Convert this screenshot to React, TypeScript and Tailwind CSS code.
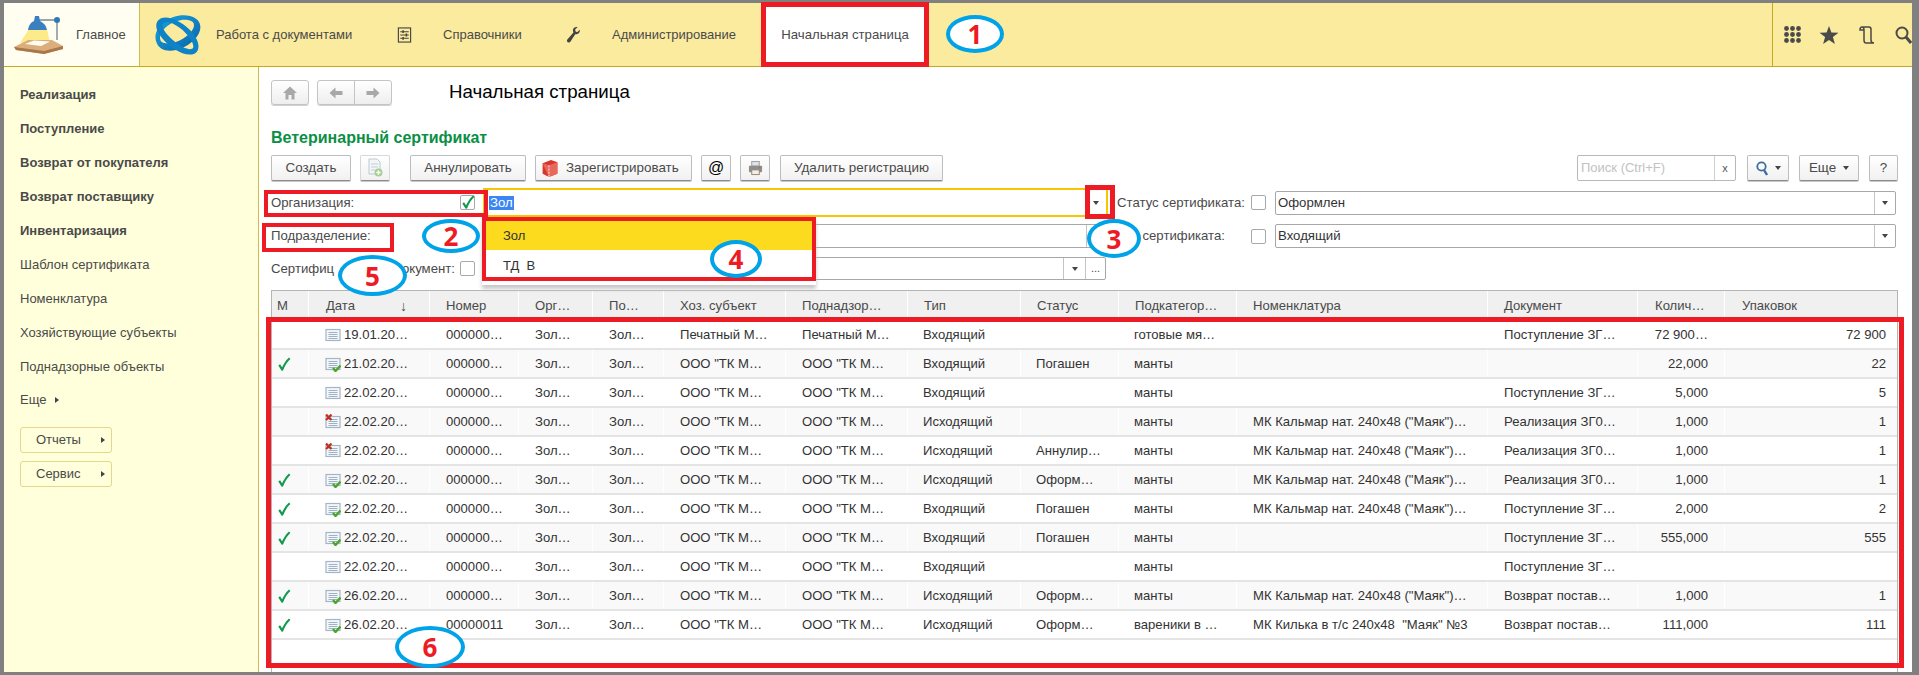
import React from "react";

const Check = ({ className = "" }: { className?: string }) => (
  <svg viewBox="0 0 16 16" className={className}>
    <path d="M2.5 9 L6 14.5 C8 9.5 10.5 5 14.5 1.5" fill="none" stroke="#0f9a4c" strokeWidth="2.4" strokeLinejoin="round" />
  </svg>
);

const Doc = ({ kind }: { kind: "doc" | "ok" | "x" }) => (
  <svg viewBox="0 0 16 16" className="w-[16px] h-[16px] shrink-0">
    <rect x="1" y="2.5" width="14" height="11" fill="#f4f7fa" stroke="#a5b5c4" strokeWidth="1.2" />
    <path d="M3.5 5.5h9M3.5 7.5h9M3.5 9.5h9M3.5 11.5h9" stroke="#9fb2c4" strokeWidth="1" />
    {kind === "ok" && <path d="M8 12 L10.5 15 L15.5 9.5" fill="none" stroke="#4aa52e" strokeWidth="2.4" />}
    {kind === "x" && <path d="M1 0.5 L6.5 6 M6.5 0.5 L1 6" stroke="#c0321f" strokeWidth="2.2" />}
  </svg>
);

const Lamp = () => (
  <svg viewBox="0 0 50 40" className="w-[50px] h-[40px] ml-[10px] shrink-0">
    <path d="M15 14 L6 28 L36 28 L33 14 Z" fill="#fdeb8a" />
    <path d="M0 32 L14 25 L38 25 L49 31 L49 34 L30 39 L2 35 Z" fill="#dcae7e" />
    <path d="M0 32 L30 36 L49 31 L49 34 L30 39 L2 35 Z" fill="#a8774a" />
    <path d="M11 29 L20 25.5 L36 26.5 L27 31 Z" fill="#fffdf0" />
    <path d="M22 5 H43 V25" fill="none" stroke="#9aa5ad" strokeWidth="1.8" />
    <path d="M14 15 Q15 8 20 6 L21 1 L25 1 L26 6 Q32 9 33 15 Z" fill="#3a7fc0" />
    <circle cx="43" cy="5" r="3" fill="#2f78b8" />
  </svg>
);

const Logo = () => (
  <svg viewBox="0 0 47 41" className="w-[47px] h-[41px] ml-[14px] shrink-0">
    <defs>
      <linearGradient id="lg" x1="0" y1="0" x2="1" y2="1">
        <stop offset="0" stopColor="#1aa7e0" />
        <stop offset="1" stopColor="#0a5fa8" />
      </linearGradient>
    </defs>
    <path fillRule="evenodd" fill="url(#lg)" d="M2 27 C-2 13 18 -2 36 2 C48 5 50 16 40 26 C28 38 6 42 2 27 Z M6 24 C6 33 24 30 34 21 C42 14 42 7 34 6 C22 4 6 14 6 24 Z" />
    <path fillRule="evenodd" fill="#0e84c6" d="M3 8 C8 -1 24 4 36 16 C46 26 47 37 40 40 C30 43 16 34 8 24 C3 18 1 13 3 8 Z M9 10 C7 14 13 21 20 27 C28 34 37 37 39 34 C41 30 34 20 26 14 C18 8 11 6 9 10 Z" />
  </svg>
);

const Btn = ({ children, className = "" }: { children?: React.ReactNode; className?: string }) => (
  <div className={`h-[26px] flex items-center shrink-0 whitespace-nowrap rounded-[2px] border border-[#bdbdbd] border-b-[#8c8c8c] bg-linear-to-b from-white to-[#f1f1f1] shadow-[0_1px_0_#c8c8c8] text-[13.4px] text-[#4a4a4a] ${className}`}>
    {children}
  </div>
);

const Box = () => <div className="w-[15px] h-[15px] rounded-[2px] border border-[#a8a8a8] bg-white shrink-0" />;
const Caret = () => <span className="w-0 h-0 border-x-[3px] border-x-transparent border-t-[4px] border-t-[#444]" />;

const Field = ({ text, className = "" }: { text?: string; className?: string }) => (
  <div className={`h-[24px] flex items-center rounded-[2px] border border-[#a8a8a8] bg-white text-[#333] ${className}`}>
    <span className="flex-1 pl-[2px]">{text}</span>
    <span className="w-[21px] h-full flex items-center justify-center border-l border-[#c4c4c4]"><Caret /></span>
  </div>
);

const cols = "grid grid-cols-[37px_121px_89px_74px_71px_122px_122px_113px_98px_118px_251px_150px_87px_1fr]";
const sideItems = ["Шаблон сертификата", "Номенклатура", "Хозяйствующие субъекты", "Поднадзорные объекты"];
const sideBold = ["Реализация", "Поступление", "Возврат от покупателя", "Возврат поставщику", "Инвентаризация"];
const heads = ["Номер", "Орг…", "По…", "Хоз. субъект", "Поднадзор…", "Тип", "Статус", "Подкатегор…", "Номенклатура", "Документ"];

const mk = 'МК Кальмар нат. 240х48 ("Маяк")…';
const tk = 'ООО "ТК М…';
const pz = "Поступление ЗГ…";
const rz = "Реализация ЗГ0…";
const vz = "Возврат постав…";
type Row = { c: boolean; k: "doc" | "ok" | "x"; d: string; n: string; s: string; t: string; st: string; pk: string; nm: string; doc: string; q: string; u: string };
const row = (c: boolean, k: Row["k"], d: string, t: string, st: string, pk: string, nm: string, doc: string, q: string, u: string, n = "000000…", s = tk): Row => ({ c, k, d, n, s, t, st, pk, nm, doc, q, u });
const rows: Row[] = [
  row(false, "doc", "19.01.20…", "Входящий", "", "готовые мя…", "", pz, "72 900…", "72 900", "000000…", "Печатный М…"),
  row(true, "ok", "21.02.20…", "Входящий", "Погашен", "манты", "", "", "22,000", "22"),
  row(false, "doc", "22.02.20…", "Входящий", "", "манты", "", pz, "5,000", "5"),
  row(false, "x", "22.02.20…", "Исходящий", "", "манты", mk, rz, "1,000", "1"),
  row(false, "x", "22.02.20…", "Исходящий", "Аннулир…", "манты", mk, rz, "1,000", "1"),
  row(true, "ok", "22.02.20…", "Исходящий", "Оформ…", "манты", mk, rz, "1,000", "1"),
  row(true, "ok", "22.02.20…", "Входящий", "Погашен", "манты", mk, pz, "2,000", "2"),
  row(true, "ok", "22.02.20…", "Входящий", "Погашен", "манты", "", pz, "555,000", "555"),
  row(false, "doc", "22.02.20…", "Входящий", "", "манты", "", pz, "", ""),
  row(true, "ok", "26.02.20…", "Исходящий", "Оформ…", "манты", mk, vz, "1,000", "1"),
  row(true, "ok", "26.02.20…", "Исходящий", "Оформ…", "вареники в …", 'МК Килька в т/с 240х48  "Маяк" №3', vz, "111,000", "111", "00000011"),
];

const Cell = ({ children, pad = "pl-[16px]", className = "" }: { children?: React.ReactNode; pad?: string; className?: string }) => (
  <div className={`flex items-center whitespace-pre overflow-hidden border-r border-white ${pad} ${className}`}>{children}</div>
);

const Mark = ({ n, className }: { n: string; className: string }) => (
  <div className={`absolute flex items-center justify-center rounded-[50%] border-[4px] border-[#00a2e8] bg-white text-[#ed1c24] font-bold text-[26px] leading-none font-['Open_Sans',sans-serif] pointer-events-none ${className}`}>
    {n}
  </div>
);

export default function App() {
  return (
    <div className="relative w-[1919px] h-[675px] overflow-hidden bg-[#808080] pt-[3px] pl-[4px] pr-[7px] pb-[3px] flex flex-col font-['Liberation_Sans',Arial,sans-serif] text-[13px] text-[#4a4a4a]">
      {/* Top bar */}
      <header className="h-[64px] shrink-0 flex bg-[#fbeb9e] border-b border-[#c9a820]">
        <div className="w-[136px] flex items-center bg-[#fffef0] border-r border-[#d2b94a]">
          <Lamp />
          <span className="ml-[12px]">Главное</span>
        </div>
        <div className="flex items-center whitespace-nowrap">
          <Logo />
          <span className="ml-[15px] w-[136px]">Работа с документами</span>
          <svg viewBox="0 0 15 17" className="ml-[45px] w-[15px] h-[16px] shrink-0" fill="none" stroke="#444" strokeWidth="1.2">
            <rect x="1" y="1" width="13" height="15" />
            <path d="M3 5h9M3 8.5h9M3 12h9" />
            <path d="M6 3.5v3M9.5 7v3M6 10.5v3" strokeWidth="1.6" />
          </svg>
          <span className="ml-[31px] w-[79px]">Справочники</span>
          <svg viewBox="0 0 17 20" className="ml-[43px] w-[17px] h-[16px] shrink-0" fill="#444">
            <path d="M16.5 3.5 L13 6.5 L10.8 5.3 L10.8 2.5 L13.8 0.3 C11 -0.6 8 1 7.8 4 C7.7 5.2 8 6 8.4 6.8 L0.8 15.5 C-0.2 16.8 0.5 18.6 1.3 19 C2.4 19.7 3.7 19.5 4.6 18.4 L10.7 9 C13.6 9.6 16.8 7.8 16.5 3.5 Z" />
          </svg>
          <span className="ml-[30px] w-[124px]">Администрирование</span>
        </div>
        <div className="ml-[30px] w-[158px] flex items-center justify-center bg-white whitespace-nowrap text-[13.2px]">Начальная страница</div>
        <div className="flex-1" />
        <div className="w-[140px] flex items-center border-l border-[#c9a820] pl-[11px]">
          <svg viewBox="0 0 17 17" className="w-[17px] h-[17px]" fill="#4a4a4a">
            {[2.5, 8.5, 14.5].flatMap((y) => [2.5, 8.5, 14.5].map((x) => <circle key={`${x}-${y}`} cx={x} cy={y} r="2.4" />))}
          </svg>
          <svg viewBox="0 0 20 18" className="ml-[18px] w-[20px] h-[18px]" fill="#4a4a4a">
            <path d="M10 0 L12.4 6.6 L19.5 6.8 L13.9 11.1 L15.9 18 L10 14 L4.1 18 L6.1 11.1 L0.5 6.8 L7.6 6.6 Z" />
          </svg>
          <svg viewBox="0 0 16 18" className="ml-[20px] w-[16px] h-[18px]" fill="none" stroke="#4a4a4a" strokeWidth="1.5">
            <path d="M3 1 H10 C11.5 1 12 2 12 3.5 V14 C12 15.5 13 17 15 17 H7 C5.5 17 5 15.5 5 14 V4 C5 2 4 1 3 1 C1.5 1 1 2.5 1 4 H5" />
          </svg>
          <svg viewBox="0 0 17 18" className="ml-[20px] w-[17px] h-[18px] shrink-0" fill="none" stroke="#4a4a4a" strokeWidth="2">
            <circle cx="7" cy="7" r="5.5" />
            <path d="M11 11 L16 17" strokeWidth="3" />
          </svg>
        </div>
      </header>

      <div className="flex flex-1 min-h-0">
        {/* Sidebar */}
        <aside className="w-[255px] shrink-0 bg-[#ffffdb] border-r border-[#d2b94a] pl-[16px] pt-[11px]">
          {sideBold.map((s) => (
            <div key={s} className="h-[34px] flex items-center font-bold">{s}</div>
          ))}
          {sideItems.map((s) => (
            <div key={s} className="h-[34px] flex items-center">{s}</div>
          ))}
          <div className="h-[32px] flex items-center">
            Еще
            <span className="ml-[9px] w-0 h-0 border-y-[3px] border-y-transparent border-l-[4px] border-l-[#444]" />
          </div>
          {["Отчеты", "Сервис"].map((s, i) => (
            <div key={s} className={`w-[92px] h-[26px] flex items-center pl-[15px] rounded-[3px] border border-[#e6d68c] ${i === 0 ? "mt-[11px]" : "mt-[8px]"}`}>
              <span className="w-[65px]">{s}</span>
              <span className="w-0 h-0 border-y-[3px] border-y-transparent border-l-[4px] border-l-[#444]" />
            </div>
          ))}
        </aside>

        {/* Main */}
        <main className="flex-1 min-w-0 bg-white pl-[12px] pr-[14px] pt-[13px] flex flex-col">
          <div className="h-[25px] flex items-center shrink-0">
            <div className="w-[38px] h-[25px] flex items-center justify-center rounded-[3px] border border-[#c4c4c4] bg-linear-to-b from-white to-[#eeeeee] shadow-[0_1px_0_#d0d0d0]">
              <svg viewBox="0 0 14 14" className="w-[14px] h-[14px]" fill="#a8a8a8"><path d="M7 0.5 L14 7 H11.5 V13.5 H8.5 V9 H5.5 V13.5 H2.5 V7 H0 Z" /></svg>
            </div>
            <div className="ml-[8px] w-[75px] h-[25px] flex rounded-[3px] border border-[#c4c4c4] bg-linear-to-b from-white to-[#eeeeee] shadow-[0_1px_0_#d0d0d0]">
              <div className="w-[37px] flex items-center justify-center border-r border-[#c4c4c4]">
                <svg viewBox="0 0 14 12" className="w-[14px] h-[12px]" fill="#a8a8a8"><path d="M0.5 6 L6.5 0.5 V4 H13.5 V8 H6.5 V11.5 Z" /></svg>
              </div>
              <div className="flex-1 flex items-center justify-center">
                <svg viewBox="0 0 14 12" className="w-[14px] h-[12px]" fill="#a8a8a8"><path d="M13.5 6 L7.5 0.5 V4 H0.5 V8 H7.5 V11.5 Z" /></svg>
              </div>
            </div>
            <div className="ml-[57px] text-[18.7px] text-black whitespace-nowrap">Начальная страница</div>
          </div>

          <div className="mt-[23px] h-[20px] flex items-center shrink-0 font-bold text-[16px] text-[#0a8f45]">Ветеринарный сертификат</div>

          {/* Toolbar */}
          <div className="mt-[7px] flex shrink-0">
            <Btn className="w-[80px] justify-center">Создать</Btn>
            <Btn className="ml-[9px] w-[30px] justify-center border-[#d8d8d8]">
              <svg viewBox="0 0 16 20" className="w-[16px] h-[20px]">
                <path d="M2 1 H10 L13 4 V16 H2 Z" fill="#f2f6f8" stroke="#bcc9d2" />
                <path d="M4 6h7M4 9h7M4 12h4" stroke="#c2cfd8" />
                <circle cx="11.5" cy="14.5" r="4" fill="#a5cf94" />
                <path d="M11.5 12.3v4.4M9.3 14.5h4.4" stroke="#fff" strokeWidth="1.4" />
              </svg>
            </Btn>
            <Btn className="ml-[20px] w-[116px] justify-center">Аннулировать</Btn>
            <Btn className="ml-[9px] w-[157px] pl-[5px]">
              <svg viewBox="0 0 16 18" className="w-[18px] h-[19px] mr-[7px]">
                <path d="M1 4 L9 1 L15 3 L15 14 L7 17 L1 14 Z" fill="#d8362a" />
                <path d="M1 4 L7 6 L15 3 L15 14 L7 17 Z" fill="#e9675b" />
                <path d="M7 6 V17" stroke="#fff" strokeWidth="0.8" strokeDasharray="2 1" />
              </svg>
              Зарегистрировать
            </Btn>
            <Btn className="ml-[9px] w-[30px] justify-center text-[16px] text-black">@</Btn>
            <Btn className="ml-[9px] w-[30px] justify-center">
              <svg viewBox="0 0 16 16" className="w-[15px] h-[16px]">
                <rect x="4" y="1" width="8" height="5" fill="#dde3e8" stroke="#9a9a9a" />
                <rect x="1" y="5.5" width="14" height="7" rx="1" fill="#8d8d8d" />
                <rect x="4" y="10" width="8" height="5" fill="#eef0f2" stroke="#a08060" />
                <circle cx="12.5" cy="7.5" r="0.8" fill="#e05030" />
              </svg>
            </Btn>
            <Btn className="ml-[10px] w-[163px] justify-center">Удалить регистрацию</Btn>
            <div className="flex-1" />
            <div className="w-[159px] h-[26px] flex items-center rounded-[2px] border border-[#b8b8b8] bg-white text-[#c2c2c2]">
              <span className="flex-1 pl-[3px]">Поиск (Ctrl+F)</span>
              <span className="w-[21px] h-full flex items-center justify-center border-l border-[#cfcfcf] text-[#555] text-[11px]">x</span>
            </div>
            <Btn className="ml-[11px] w-[42px] justify-center">
              <svg viewBox="0 0 12 15" className="w-[12px] h-[15px] mr-[7px]" fill="none" stroke="#3d6d9e" strokeWidth="1.8">
                <circle cx="5.5" cy="5.5" r="4.2" />
                <path d="M8 9 L11 14" strokeWidth="2.4" />
              </svg>
              <Caret />
            </Btn>
            <Btn className="ml-[10px] w-[60px] justify-center">
              <span className="mr-[7px]">Еще</span>
              <Caret />
            </Btn>
            <Btn className="ml-[10px] w-[29px] justify-center">?</Btn>
          </div>

          {/* Filters */}
          <div className="mt-[7px] h-[29px] flex items-center shrink-0 text-[13.2px]">
            <span className="w-[189px]">Организация:</span>
            <div className="relative w-[15px] h-[15px] rounded-[2px] border border-[#a8a8a8] bg-white shrink-0">
              <Check className="absolute -top-[2px] left-0 w-[14px] h-[16px]" />
            </div>
            <div className="ml-[8px] w-[625px] h-[29px] flex items-center border-2 border-[#f7c600] bg-white">
              <span className="ml-[4px] h-[14px] flex items-center px-[1px] bg-[#3a86f4] text-white">Зол</span>
              <span className="flex-1" />
              <span className="w-[20px] flex justify-center"><Caret /></span>
            </div>
            <span className="ml-[9px] w-[134px] whitespace-nowrap">Статус сертификата:</span>
            <Box />
            <Field text="Оформлен" className="ml-[9px] w-[621px]" />
          </div>

          <div className="mt-[7px] h-[24px] flex items-center shrink-0 text-[13.2px]">
            <span className="w-[189px]">Подразделение:</span>
            <Box />
            <Field className="ml-[8px] w-[625px]" />
            <span className="ml-[9px] w-[134px] pr-[26px] text-right whitespace-nowrap">сертификата:</span>
            <Box />
            <Field text="Входящий" className="ml-[9px] w-[621px]" />
          </div>

          <div className="mt-[9px] h-[23px] flex items-center shrink-0 text-[13.2px]">
            <div className="w-[189px] pr-[5px] flex justify-between whitespace-nowrap">
              <span>Сертифиц</span>
              <span>окумент:</span>
            </div>
            <Box />
            <div className="ml-[8px] w-[623px] h-[23px] flex items-center justify-end rounded-[2px] border border-[#a8a8a8] bg-white">
              <span className="w-[22px] h-full flex items-center justify-center border-l border-[#c4c4c4]"><Caret /></span>
              <span className="w-[20px] h-full flex items-center justify-center border-l border-[#c4c4c4] text-[11px] leading-none">...</span>
            </div>
          </div>

          {/* Table */}
          <div className="mt-[10px] flex-1 min-h-0 flex flex-col border-x border-t border-[#b5b5b5] text-[#333] text-[13.1px]">
            <div className={`${cols} h-[30px] shrink-0 bg-[#f0f0f0] text-[#4a4a4a]`}>
              <Cell pad="pl-[5px]">М</Cell>
              <Cell pad="pl-[17px]" className="justify-between pr-[22px]"><span>Дата</span><span className="text-[14px]">↓</span></Cell>
              {heads.map((h) => <Cell key={h}>{h}</Cell>)}
              <Cell pad="pl-[17px]">Колич…</Cell>
              <Cell pad="pl-[17px]" className="border-r-0">Упаковок</Cell>
            </div>
            {rows.map((r, i) => (
              <div key={i} className={`${cols} h-[29px] shrink-0 border-b-2 border-[#e4e4e4] ${i % 2 ? "bg-[#f9f9f9]" : "bg-white"}`}>
                <Cell pad="pl-[5px]">{r.c && <Check className="w-[14px] h-[16px]" />}</Cell>
                <Cell><Doc kind={r.k} /><span className="ml-[3px]">{r.d}</span></Cell>
                <Cell>{r.n}</Cell>
                <Cell>{"Зол…"}</Cell>
                <Cell>{"Зол…"}</Cell>
                <Cell>{r.s}</Cell>
                <Cell>{r.s}</Cell>
                <Cell pad="pl-[15px]">{r.t}</Cell>
                <Cell pad="pl-[15px]">{r.st}</Cell>
                <Cell pad="pl-[15px]">{r.pk}</Cell>
                <Cell>{r.nm}</Cell>
                <Cell>{r.doc}</Cell>
                <Cell pad="pr-[16px]" className="justify-end">{r.q}</Cell>
                <Cell pad="pr-[11px]" className="justify-end border-r-0">{r.u}</Cell>
              </div>
            ))}
          </div>
        </main>
      </div>

      {/* Dropdown overlay */}
      <div className="absolute left-[482px] top-[217px] w-[334px] h-[68px] shadow-[0_4px_4px_#c8c8c8] bg-white text-[#333]">
        <div className="h-[33px] flex items-center pl-[21px] pt-[5px] bg-[#fcdb1f]">Зол</div>
        <div className="h-[31px] flex items-center pl-[21px] whitespace-pre">ТД  В</div>
      </div>

      {/* Red annotation boxes */}
      <div className="absolute left-[761px] top-[2px] w-[168px] h-[65px] border-[5px] border-[#ed1c24] pointer-events-none" />
      <div className="absolute left-[264px] top-[190px] w-[224px] h-[27px] border-[4px] border-[#ed1c24] pointer-events-none" />
      <div className="absolute left-[262px] top-[223px] w-[132px] h-[29px] border-[4px] border-[#ed1c24] pointer-events-none" />
      <div className="absolute left-[1085px] top-[185px] w-[30px] h-[34px] border-[5px] border-[#ed1c24] pointer-events-none" />
      <div className="absolute left-[482px] top-[217px] w-[334px] h-[64px] border-[4px] border-[#ed1c24] pointer-events-none" />
      <div className="absolute left-[266px] top-[317px] w-[1638px] h-[351px] border-[5px] border-[#ed1c24] pointer-events-none" />

      {/* Number marks */}
      <Mark n="1" className="left-[946px] top-[15px] w-[58px] h-[38px]" />
      <Mark n="2" className="left-[422px] top-[219px] w-[58px] h-[34px]" />
      <Mark n="3" className="left-[1087px] top-[219px] w-[54px] h-[39px]" />
      <Mark n="4" className="left-[710px] top-[240px] w-[52px] h-[38px]" />
      <Mark n="5" className="left-[338px] top-[255px] w-[69px] h-[41px]" />
      <Mark n="6" className="left-[395px] top-[626px] w-[70px] h-[42px]" />
    </div>
  );
}
